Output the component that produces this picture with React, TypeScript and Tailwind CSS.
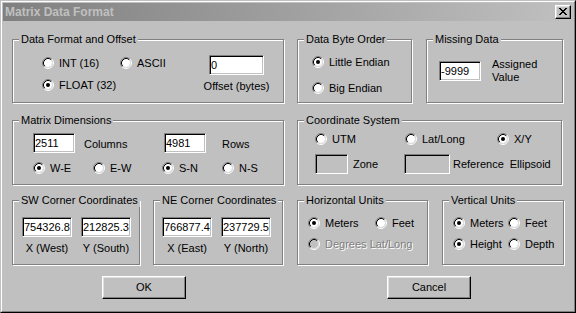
import React from 'react';

const Radio = ({ checked = false, disabled = false }: { checked?: boolean; disabled?: boolean }) => (
  <svg width="12" height="12" viewBox="0 0 12 12" className="block shrink-0">
    <circle cx="6" cy="6" r="4" fill={disabled ? '#c0c0c0' : '#ffffff'} />
    <path d="M2.11 9.89 A5.5 5.5 0 0 1 9.89 2.11" fill="none" stroke="#808080" />
    <path d="M9.89 2.11 A5.5 5.5 0 0 1 2.11 9.89" fill="none" stroke="#ffffff" />
    <path d="M2.82 9.18 A4.5 4.5 0 0 1 9.18 2.82" fill="none" stroke="#000000" />
    <path d="M9.18 2.82 A4.5 4.5 0 0 1 2.82 9.18" fill="none" stroke="#dfdfdf" />
    {checked && <circle cx="6" cy="6" r="2" fill={disabled ? '#808080' : '#000000'} />}
  </svg>
);

interface RadioItemProps {
  label: string;
  checked?: boolean;
  disabled?: boolean;
  className?: string;
}

const RadioItem: React.FC<RadioItemProps> = ({ label, checked, disabled, className = '' }) => (
  <div className={`flex items-center h-[12px] ${className}`}>
    <Radio checked={checked} disabled={disabled} />
    <span
      className={`ml-[5px] leading-[13px] whitespace-nowrap ${
        disabled ? 'text-[#808080] [text-shadow:1px_1px_0_#fff]' : ''
      }`}
    >
      {label}
    </span>
  </div>
);

const Edit = ({ value = '', disabled = false, className = '' }: { value?: string; disabled?: boolean; className?: string }) => (
  <div
    className={`flex items-center h-[20px] shrink-0 overflow-hidden border border-t-[#808080] border-l-[#808080] border-b-white border-r-white shadow-[inset_1px_1px_0_#000,inset_-1px_-1px_0_#c0c0c0] ${
      disabled ? 'bg-[#c0c0c0]' : 'bg-white'
    } ${className}`}
  >
    <span className="pl-[1px] leading-[13px] whitespace-nowrap">{value}</span>
  </div>
);

const LabeledEdit = ({ value, label, className = '' }: { value: string; label: string; className?: string }) => (
  <div className={`flex flex-col items-center w-[50px] ${className}`}>
    <Edit value={value} className="w-[50px]" />
    <span className="mt-[5px] leading-[13px] whitespace-nowrap">{label}</span>
  </div>
);

const Group = ({ title, className = '', children }: { title: string; className?: string; children?: React.ReactNode }) => (
  <div className={`relative shrink-0 border border-[#808080] shadow-[1px_1px_0_#fff,inset_1px_1px_0_#fff] ${className}`}>
    <span className="absolute -top-[7px] left-[6px] bg-[#c0c0c0] px-[2px] leading-[13px] whitespace-nowrap">{title}</span>
    {children}
  </div>
);

const Button = ({ label, className = '' }: { label: string; className?: string }) => (
  <div
    className={`flex items-center justify-center h-[23px] w-[84px] border border-t-white border-l-white border-b-black border-r-black shadow-[inset_-1px_-1px_0_#808080,inset_1px_1px_0_#dfdfdf] ${className}`}
  >
    {label}
  </div>
);

// pixel glyph of the classic close button
const closePixels = [
  [0, 0], [1, 0], [6, 0], [7, 0],
  [1, 1], [2, 1], [5, 1], [6, 1],
  [2, 2], [3, 2], [4, 2], [5, 2],
  [3, 3], [4, 3],
  [2, 4], [3, 4], [4, 4], [5, 4],
  [1, 5], [2, 5], [5, 5], [6, 5],
  [0, 6], [1, 6], [6, 6], [7, 6],
];

const CloseButton = () => (
  <div className="w-[16px] h-[14px] border border-t-white border-l-white border-b-black border-r-black shadow-[inset_-1px_-1px_0_#808080,inset_1px_1px_0_#dfdfdf] bg-[#c0c0c0] pl-[3px] pt-[2px]">
    <svg width="8" height="7" viewBox="0 0 8 7" className="block">
      {closePixels.map(([x, y], i) => (
        <rect key={i} x={x} y={y} width="1" height="1" fill="#000" />
      ))}
    </svg>
  </div>
);

export default function App() {
  return (
    <div className="w-[576px] h-[313px] bg-[#c0c0c0] border border-t-[#c0c0c0] border-l-[#c0c0c0] border-r-black border-b-black font-['Liberation_Sans',Arial,sans-serif] text-[11px] text-black select-none">
      <div className="h-full border border-t-white border-l-white border-r-[#808080] border-b-[#808080] p-[1px] flex flex-col">
        {/* title bar */}
        <div className="flex items-center justify-between h-[18px] shrink-0 bg-linear-to-r from-[#808080] to-[#c0c0c0] pl-[2px] pr-[2px]">
          <span className="font-bold text-[12px] leading-[18px] text-[#c0c0c0]">Matrix Data Format</span>
          <CloseButton />
        </div>

        {/* row 1 */}
        <div className="flex mt-[18px] pl-[9px]">
          <Group title="Data Format and Offset" className="w-[272px] h-[64px]">
            <div className="flex pl-[29px] pt-[15px]">
              <div className="flex flex-col mt-[2px] w-[78px]">
                <RadioItem label="INT (16)" />
                <RadioItem label="FLOAT (32)" checked className="mt-[10px]" />
              </div>
              <div className="mt-[2px] w-[89px]">
                <RadioItem label="ASCII" />
              </div>
              <div className="flex flex-col items-center w-[55px]">
                <Edit value="0" className="w-[55px]" />
                <span className="mt-[5px] leading-[13px] whitespace-nowrap">Offset (bytes)</span>
              </div>
            </div>
          </Group>
          <Group title="Data Byte Order" className="ml-[13px] w-[115px] h-[64px]">
            <div className="flex flex-col pl-[14px] pt-[16px]">
              <RadioItem label="Little Endian" checked />
              <RadioItem label="Big Endian" className="mt-[14px]" />
            </div>
          </Group>
          <Group title="Missing Data" className="ml-[14px] w-[137px] h-[64px]">
            <div className="flex items-start pl-[12px] pt-[18px]">
              <Edit value="-9999" className="w-[42px] mt-[3px]" />
              <div className="ml-[11px] leading-[13px]">
                Assigned
                <br />
                Value
              </div>
            </div>
          </Group>
        </div>

        {/* row 2 */}
        <div className="flex mt-[17px] pl-[9px]">
          <Group title="Matrix Dimensions" className="w-[272px] h-[65px]">
            <div className="flex flex-col pl-[20px] pt-[12px]">
              <div className="flex items-center">
                <Edit value="2511" className="w-[42px]" />
                <span className="ml-[9px] w-[80px] leading-[13px] pt-[2px]">Columns</span>
                <Edit value="4981" className="w-[42px]" />
                <span className="ml-[16px] leading-[13px] pt-[2px]">Rows</span>
              </div>
              <div className="flex mt-[9px]">
                <RadioItem label="W-E" checked className="w-[60px]" />
                <RadioItem label="E-W" className="w-[69px]" />
                <RadioItem label="S-N" checked className="w-[60px]" />
                <RadioItem label="N-S" />
              </div>
            </div>
          </Group>
          <Group title="Coordinate System" className="ml-[13px] w-[265px] h-[65px]">
            <div className="flex flex-col pl-[17px] pt-[12px]">
              <div className="flex">
                <RadioItem label="UTM" className="w-[90px]" />
                <RadioItem label="Lat/Long" className="w-[92px]" />
                <RadioItem label="X/Y" checked />
              </div>
              <div className="flex items-center mt-[9px]">
                <Edit disabled className="w-[33px]" />
                <span className="ml-[5px] w-[51px] leading-[13px]">Zone</span>
                <Edit disabled className="w-[46px]" />
                <span className="ml-[3px] leading-[13px]">Reference</span>
                <span className="ml-[6px] leading-[13px]">Ellipsoid</span>
              </div>
            </div>
          </Group>
        </div>

        {/* row 3 */}
        <div className="flex mt-[15px] pl-[9px]">
          <Group title="SW Corner Coordinates" className="w-[128px] h-[65px]">
            <div className="flex pl-[9px] pt-[16px]">
              <LabeledEdit value="754326.8" label="X (West)" />
              <LabeledEdit value="212825.3" label="Y (South)" className="ml-[9px]" />
            </div>
          </Group>
          <Group title="NE Corner Coordinates" className="ml-[13px] w-[130px] h-[65px]">
            <div className="flex pl-[8px] pt-[16px]">
              <LabeledEdit value="766877.4" label="X (East)" />
              <LabeledEdit value="237729.5" label="Y (North)" className="ml-[9px]" />
            </div>
          </Group>
          <Group title="Horizontal Units" className="ml-[14px] w-[131px] h-[65px]">
            <div className="flex flex-col pl-[10px] pt-[16px]">
              <div className="flex">
                <RadioItem label="Meters" checked className="w-[67px]" />
                <RadioItem label="Feet" />
              </div>
              <RadioItem label="Degrees Lat/Long" disabled className="mt-[9px]" />
            </div>
          </Group>
          <Group title="Vertical Units" className="ml-[14px] w-[122px] h-[65px]">
            <div className="flex flex-col pl-[10px] pt-[16px]">
              <div className="flex">
                <RadioItem label="Meters" checked className="w-[55px]" />
                <RadioItem label="Feet" />
              </div>
              <div className="flex mt-[9px]">
                <RadioItem label="Height" checked className="w-[55px]" />
                <RadioItem label="Depth" />
              </div>
            </div>
          </Group>
        </div>

        {/* buttons */}
        <div className="flex mt-[11px]">
          <Button label="OK" className="ml-[99px]" />
          <Button label="Cancel" className="ml-[201px]" />
        </div>
      </div>
    </div>
  );
}
